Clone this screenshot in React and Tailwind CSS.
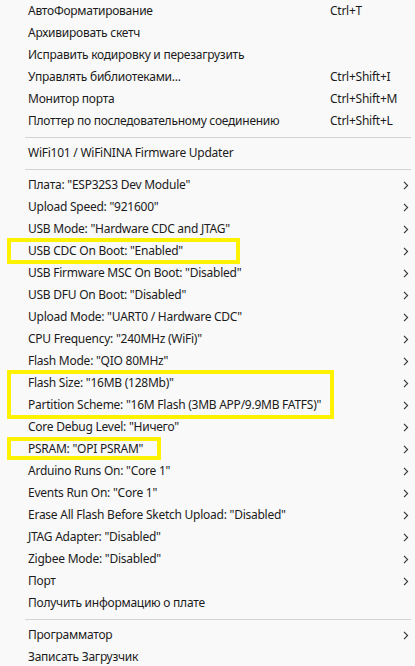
import React from 'react';

const topItems = [
  { label: 'АвтоФорматирование', shortcut: 'Ctrl+T' },
  { label: 'Архивировать скетч' },
  { label: 'Исправить кодировку и перезагрузить' },
  { label: 'Управлять библиотеками...', shortcut: 'Ctrl+Shift+I' },
  { label: 'Монитор порта', shortcut: 'Ctrl+Shift+M' },
  { label: 'Плоттер по последовательному соединению', shortcut: 'Ctrl+Shift+L' },
];

// Chevron for items with a submenu
const Chevron = () => (
  <svg width="6" height="9" viewBox="0 0 6 9" className="absolute left-[403px] top-[7px]">
    <path d="M1 0.8 L4.6 4.5 L1 8.2" fill="none" stroke="#333" strokeWidth="1.1" />
  </svg>
);

const Item = ({ label, shortcut, sub }) => (
  <div className="relative h-[22px] leading-[22px] whitespace-nowrap">
    <span className="absolute left-[28px]">{label}</span>
    {shortcut && <span className="absolute left-[330px]">{shortcut}</span>}
    {sub && <Chevron />}
  </div>
);

const Separator = () => (
  <div className="h-[10px] flex items-center pl-[25px] pr-[4px]">
    <div className="h-px w-full bg-[#d4d4d4]" />
  </div>
);

// Yellow marker frame drawn over highlighted rows
const Marker = ({ className }) => (
  <div className={`absolute left-[7px] border-[4px] border-[#fff200] pointer-events-none ${className}`} />
);

const App = () => {
  return (
    <div
      className="w-[415px] h-[666px] overflow-hidden bg-[#f9f9f9] text-[#1b1b1b] text-[12px] tracking-[-0.25px]"
      style={{ fontFamily: '"Noto Sans", "Open Sans", sans-serif' }}
    >
      {topItems.map((it) => (
        <Item key={it.label} {...it} />
      ))}
      <Separator />
      <Item label="WiFi101 / WiFiNINA Firmware Updater" />
      <Separator />

      <Item label='Плата: "ESP32S3 Dev Module"' sub />
      <Item label='Upload Speed: "921600"' sub />
      <Item label='USB Mode: "Hardware CDC and JTAG"' sub />
      <div className="relative">
        <Item label='USB CDC On Boot: "Enabled"' sub />
        <Marker className="top-[-2px] bottom-[-2px] w-[233px]" />
      </div>
      <Item label='USB Firmware MSC On Boot: "Disabled"' sub />
      <Item label='USB DFU On Boot: "Disabled"' sub />
      <Item label='Upload Mode: "UART0 / Hardware CDC"' sub />
      <Item label='CPU Frequency: "240MHz (WiFi)"' sub />
      <Item label='Flash Mode: "QIO 80MHz"' sub />
      <div className="relative">
        <Item label='Flash Size: "16MB (128Mb)"' sub />
        <Item label='Partition Scheme: "16M Flash (3MB APP/9.9MB FATFS)"' sub />
        <Marker className="top-[-2px] bottom-[-3px] w-[327px]" />
      </div>
      <Item label='Core Debug Level: "Ничего"' sub />
      <div className="relative">
        <Item label='PSRAM: "OPI PSRAM"' sub />
        <Marker className="top-[-1px] bottom-0 w-[154px]" />
      </div>
      <Item label='Arduino Runs On: "Core 1"' sub />
      <Item label='Events Run On: "Core 1"' sub />
      <Item label='Erase All Flash Before Sketch Upload: "Disabled"' sub />
      <Item label='JTAG Adapter: "Disabled"' sub />
      <Item label='Zigbee Mode: "Disabled"' sub />
      <Item label="Порт" sub />
      <Item label="Получить информацию о плате" />
      <Separator />
      <Item label="Программатор" sub />
      <Item label="Записать Загрузчик" />
    </div>
  );
};

export default App;
